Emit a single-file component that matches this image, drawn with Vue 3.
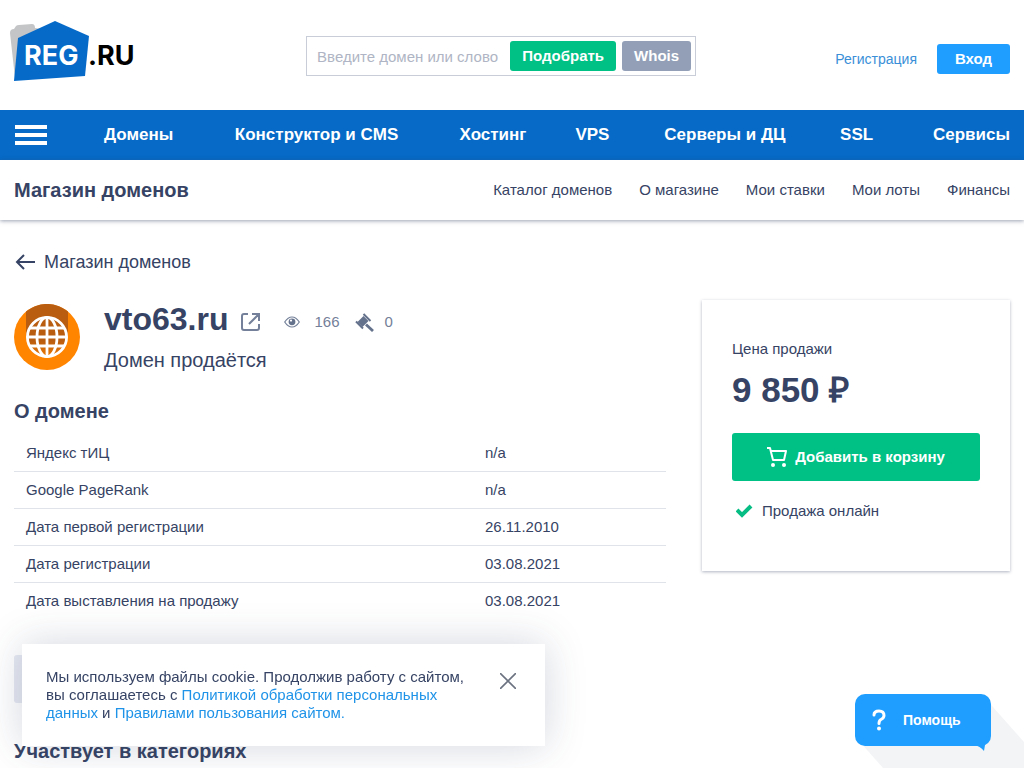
<script setup>
import { ref } from 'vue'

const query = ref('')
const cookieVisible = ref(true)
const sections = ['Домены', 'Конструктор и CMS', 'Хостинг', 'VPS', 'Серверы и ДЦ', 'SSL', 'Сервисы']
const shopLinks = ['Каталог доменов', 'О магазине', 'Мои ставки', 'Мои лоты', 'Финансы']
const facts = [
  ['Яндекс тИЦ', 'n/a'],
  ['Google PageRank', 'n/a'],
  ['Дата первой регистрации', '26.11.2010'],
  ['Дата регистрации', '03.08.2021'],
  ['Дата выставления на продажу', '03.08.2021'],
]
</script>

<template>
  <div class="page">
    <header class="top">
      <a class="logo" href="#" aria-label="REG.RU">
        <svg width="126" height="64" viewBox="0 0 126 64">
          <path d="M0 13q0-4 4-4l2-3q1-1 3-1l13-1q3 0 3 4l12 2v48H5z" fill="#c4c5c6" />
          <path d="M8 18L45 1l34 15-4 40-71 5z" fill="#066ac9" />
          <text x="14" y="45" class="logo-text" fill="#fff">REG</text>
          <text x="78" y="45" class="logo-text" fill="#000">.RU</text>
        </svg>
      </a>
      <form class="search" @submit.prevent>
        <input v-model="query" type="text" aria-label="Введите домен или слово" placeholder="Введите домен или слово" />
        <button class="btn green" type="submit">Подобрать</button>
        <button class="btn gray" type="button">Whois</button>
      </form>
      <div class="account">
        <a class="register" href="#">Регистрация</a>
        <button class="btn login" type="button">Вход</button>
      </div>
    </header>

    <nav class="main-nav" aria-label="Основное меню">
      <button class="burger" type="button" aria-label="Меню"><span></span><span></span><span></span></button>
      <div class="sections">
        <a v-for="s in sections" :key="s" href="#">{{ s }}</a>
      </div>
    </nav>

    <nav class="shop-nav" aria-label="Магазин доменов">
      <a class="shop-title" href="#">Магазин доменов</a>
      <div class="shop-links">
        <a v-for="l in shopLinks" :key="l" href="#">{{ l }}</a>
      </div>
    </nav>

    <main class="content">
      <a class="back" href="#">
        <svg width="22" height="18" viewBox="0 0 22 18" fill="none" stroke="#364364" stroke-width="2">
          <path d="M21 9H4M10 2L3 9l7 7" />
        </svg>
        Магазин доменов
      </a>

      <div class="columns">
        <div class="details">
          <div class="domain">
            <svg class="globe" width="66" height="66" viewBox="0 0 66 66">
              <defs>
                <linearGradient id="globe-fill" x1="0" y1="0" x2="0" y2="1">
                  <stop offset=".6" stop-color="#b95d10" />
                  <stop offset="1" stop-color="#f07c04" />
                </linearGradient>
              </defs>
              <circle cx="33" cy="33" r="33" fill="#ff8400" />
              <path d="M12 7.500a33 33 0 0 1 42 0V33H12z" fill="#b95d10" />
              <circle cx="33" cy="33" r="20" fill="url(#globe-fill)" />
              <g fill="none" stroke="#fff" stroke-width="2.800">
                <circle cx="33" cy="33" r="19.600" />
                <ellipse cx="33" cy="33" rx="10" ry="19.600" />
                <path d="M33 13v40M13 33h40M16 24h34M16 42h34" />
              </g>
            </svg>
            <div class="naming">
              <div class="name-row">
                <h1>vto63.ru</h1>
                <a class="external" href="#" aria-label="Открыть сайт">
                  <svg width="20" height="20" viewBox="0 0 20 20" fill="none" stroke="#748099" stroke-width="2">
                    <path d="M8 2H4Q2 2 2 4v12q0 2 2 2h13q2 0 2-2v-4M12 2h7v7M19 2L9 12" />
                  </svg>
                </a>
                <span class="stat">
                  <svg width="16" height="12" viewBox="0 0 16 12">
                    <path d="M.7 6Q4 1 8 1t7.300 5Q12 11 8 11T.7 6z" fill="none" stroke="#748099" stroke-width="1.200" />
                    <circle cx="8" cy="5.800" r="3.400" fill="#65728c" />
                    <circle cx="7" cy="4.600" r="1.100" fill="#fff" />
                  </svg>
                  166
                </span>
                <span class="stat bids">
                  <svg width="19" height="19" viewBox="0 0 19 19" fill="none" stroke="#65728c">
                    <path d="M8.500 3l5 5-6 6-5-5z" fill="#65728c" stroke="none" />
                    <path d="M8.500 1l7 7M1 8.500l7 7" stroke-width="2" />
                    <path d="M11 11.500l7 6.500" stroke-width="2.800" />
                  </svg>
                  0
                </span>
              </div>
              <p class="status">Домен продаётся</p>
            </div>
          </div>

          <h2>О домене</h2>
          <table class="facts">
            <tbody>
              <tr v-for="f in facts" :key="f[0]">
                <th scope="row">{{ f[0] }}</th>
                <td>{{ f[1] }}</td>
              </tr>
            </tbody>
          </table>
          <button class="more" type="button" aria-label="Подробнее"></button>
          <h2>Участвует в категориях</h2>
        </div>

        <aside class="card">
          <p class="price-label">Цена продажи</p>
          <p class="price">9 850 ₽</p>
          <button class="cart" type="button">
            <svg width="20" height="20" viewBox="0 0 20 20" fill="none" stroke="#fff" stroke-width="2">
              <path d="M0 1h3l3 12h11l2-9H4" stroke-linejoin="round" />
              <circle cx="6" cy="18" r="2" fill="#fff" stroke="none" />
              <circle cx="17" cy="18" r="2" fill="#fff" stroke="none" />
            </svg>
            Добавить в корзину
          </button>
          <p class="online">
            <svg width="18" height="14" viewBox="0 0 18 14" fill="none" stroke="#06bd83" stroke-width="4">
              <path d="M1 6l5 5L15 2" />
            </svg>
            Продажа онлайн
          </p>
        </aside>
      </div>
    </main>

    <div v-if="cookieVisible" class="cookie" role="dialog" aria-label="Файлы cookie">
      <p>
        Мы используем файлы cookie. Продолжив работу с сайтом,
        вы соглашаетесь с <a href="#">Политикой обработки персональных данных</a> и
        <a href="#">Правилами пользования сайтом.</a>
      </p>
      <button type="button" aria-label="Закрыть" @click="cookieVisible = false">
        <svg width="16" height="16" viewBox="0 0 16 16" fill="none" stroke="#6b7280" stroke-width="1.600">
          <path d="M0 0l16 16M16 0L0 16" />
        </svg>
      </button>
    </div>

    <div class="help">
      <svg class="help-shadow" width="169" height="74" viewBox="0 0 169 74">
        <path d="M130 4L169 48V74H28L5 48z" fill="#f3f4f6" />
      </svg>
      <button type="button">
        <svg width="14" height="22" viewBox="0 0 14 22">
          <path d="M2 6Q2 2 7 2t5 4.500Q12 9 9 10.500 7 11.500 7 14.500" fill="none" stroke="#fff" stroke-width="3" stroke-linecap="round" />
          <circle cx="7" cy="19.500" r="2" fill="#fff" />
        </svg>
        Помощь
      </button>
      <svg class="help-tail" width="14" height="7" viewBox="0 0 14 7"><path d="M0 0h11l-1 6Q6 1 0 0z" fill="#1f9eff" /></svg>
    </div>
  </div>
</template>

<style>
body {
  background: #fff;
}
</style>

<style scoped>
.page {
  font-family: "Liberation Sans", Arial, sans-serif;
  font-size: 15px;
  line-height: 18px;
  color: #364364;
  overflow: hidden;
}
h1, h2, p { margin: 0; }
a { color: inherit; text-decoration: none; }
button { border: 0; padding: 0; font: inherit; cursor: pointer; }
svg { display: block; flex: none; }

.top {
  display: flex;
  align-items: center;
  justify-content: space-between;
  height: 110px;
  padding: 0 14px 0 10px;
}
.logo { width: 126px; margin-bottom: 6px; }
.logo-text { font: 700 27px Inter, sans-serif; }
.search {
  display: flex;
  align-items: center;
  gap: 6px;
  width: 390px;
  height: 40px;
  box-sizing: border-box;
  padding: 0 4px 0 10px;
  border: 1px solid #c8cdd8;
  margin: 2px 0 0 31px;
}
.search input {
  flex: 1;
  min-width: 0;
  padding: 0;
  border: 0;
  outline: 0;
  font: 15px "Liberation Sans", Arial, sans-serif;
  color: #364364;
}
.search input::placeholder { color: #afb5c4; }
.btn {
  height: 30px;
  padding: 0 12px;
  border-radius: 3px;
  color: #fff;
  font-weight: 700;
}
.green { background: #00c185; }
.gray { background: #929fb7; }
.account { display: flex; align-items: center; gap: 20px; margin-top: 8px; }
.register { color: #3a8fd8; font-size: 14px; }
.login { width: 73px; background: #1f9eff; }

.main-nav {
  display: flex;
  align-items: center;
  height: 50px;
  padding: 0 14px;
  background: #066ac6;
}
.burger {
  display: grid;
  gap: 4px;
  width: 32px;
  margin: 0 57px 0 1px;
  background: none;
}
.burger span { height: 4px; background: #fff; }
.sections {
  flex: 1;
  display: grid;
  grid-template-columns: 131fr 225fr 116fr 89fr 176fr 93fr auto;
  color: #fff;
  font-size: 17px;
  font-weight: 700;
  white-space: nowrap;
}

.shop-nav {
  display: flex;
  align-items: center;
  justify-content: space-between;
  height: 60px;
  padding: 0 14px;
  box-shadow: 0 1px 4px rgba(54, 67, 100, .5);
}
.shop-title { font-size: 20px; font-weight: 700; }
.shop-links { display: flex; gap: 27px; }

.content { padding: 32px 14px 4px; }
.back { display: flex; width: max-content; align-items: center; gap: 8px; height: 20px; font-size: 18px; }
.columns {
  display: grid;
  grid-template-columns: 1fr 308px;
  gap: 36px;
  align-items: start;
  margin-top: 28px;
}
.domain { display: flex; gap: 24px; padding-top: 4px; height: 66px; }
.name-row { display: flex; align-items: center; height: 36px; }
h1 { font-size: 32px; line-height: 32px; margin-bottom: 6px; }
.external { margin-left: 12px; }
.stat { display: flex; align-items: center; gap: 14px; margin-left: 24px; color: #748099; }
.bids { gap: 11px; margin-left: 15px; }
.status { margin-top: 8px; font-size: 20px; line-height: 24px; }
h2 { font-size: 20px; line-height: 24px; }
.details > h2 { margin-top: 29px; }
.facts { width: 100%; margin-top: 12px; border-collapse: collapse; table-layout: fixed; }
.facts th, .facts td {
  padding: 9px 12px;
  border-bottom: 1px solid #e0e3e9;
  text-align: left;
  font-weight: 400;
}
.facts th { width: 435px; }
.facts tr:last-child > * { border-bottom: 0; }
.more { display: block; width: 160px; height: 48px; margin: 36px 0 0; border-radius: 3px; background: #e6e9f2; }
.details > .more + h2 { margin-top: 36px; }

.card {
  box-sizing: border-box;
  min-height: 271px;
  padding: 40px 30px;
  box-shadow: 0 1px 3px rgba(54, 67, 100, .4);
}
.price { margin-top: 12px; font-size: 35px; line-height: 40px; font-weight: 700; }
.cart {
  display: flex;
  align-items: center;
  justify-content: center;
  gap: 8px;
  width: 100%;
  height: 48px;
  margin-top: 23px;
  border-radius: 3px;
  background: #00c185;
  color: #fff;
  font-weight: 700;
}
.online { display: flex; align-items: center; gap: 8px; margin: 21px 0 0 4px; }

.cookie {
  position: fixed;
  left: 22px;
  bottom: 22px;
  display: flex;
  justify-content: space-between;
  align-items: flex-start;
  width: 523px;
  box-sizing: border-box;
  padding: 24px;
  background: #fff;
  box-shadow: 0 0 40px rgba(54, 67, 100, .22);
}
.cookie p { width: 430px; }
.cookie a { color: #1f93e8; }
.cookie button { padding: 5px; background: none; }

.help { position: fixed; right: 33px; bottom: 22px; }
.help button {
  position: relative;
  display: flex;
  align-items: center;
  gap: 17px;
  width: 136px;
  height: 52px;
  padding-left: 17px;
  border-radius: 10px;
  background: #1f9eff;
  color: #fff;
  font-size: 14px;
  font-weight: 700;
}
.help-shadow { position: absolute; left: 0; top: 0; }
.help-tail { position: absolute; right: 3px; top: 51px; }
</style>
